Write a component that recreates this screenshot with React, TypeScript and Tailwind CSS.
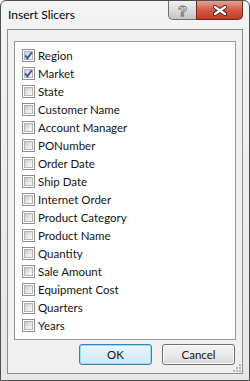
import React from "react";

const fields = [
  { name: "Region", checked: true },
  { name: "Market", checked: true },
  { name: "State", checked: false },
  { name: "Customer Name", checked: false },
  { name: "Account Manager", checked: false },
  { name: "PONumber", checked: false },
  { name: "Order Date", checked: false },
  { name: "Ship Date", checked: false },
  { name: "Internet Order", checked: false },
  { name: "Product Category", checked: false },
  { name: "Product Name", checked: false },
  { name: "Quantity", checked: false },
  { name: "Sale Amount", checked: false },
  { name: "Equipment Cost", checked: false },
  { name: "Quarters", checked: false },
  { name: "Years", checked: false },
];

const CheckBox = ({ checked }: { checked: boolean }) => (
  <div className="w-[13px] h-[13px] border border-[#8e8f8f] bg-white p-[1px] shrink-0 relative">
    <div className="w-full h-full border border-[#b4b4b4] bg-gradient-to-br from-[#c9c9c9] via-[#e6e6e6] to-[#fafafa]" />
    {checked && (
      <svg viewBox="0 0 11 11" className="absolute left-0 top-0 w-[11px] h-[11px]">
        <path d="M2.2 5.4 L4.4 8.4 L8.8 2.2" fill="none" stroke="#3a57a8" strokeWidth="1.9" />
      </svg>
    )}
  </div>
);

export default function App() {
  return (
    <div
      className="w-[250px] h-[381px] border border-[#4f4f4f] rounded-t-[6px] bg-gradient-to-b from-[#f4f4f4] to-[#e6e6e6] flex flex-col text-[#141414] overflow-hidden"
      style={{ fontFamily: 'Lato, "Noto Sans", sans-serif' }}
    >
      <div className="h-[28px] flex shrink-0">
        <div className="pl-[7px] pt-[6px] text-[12px] leading-[16px] text-black">Insert Slicers</div>
        <div className="ml-auto mr-[6px] flex h-[19px]">
          <div className="w-[28px] h-full border border-[#6f6f6f] border-t-0 border-r-0 rounded-bl-[5px] bg-gradient-to-b from-[#f0f0f0] via-[#dcdcdc] to-[#c4c4c4] flex items-center justify-center">
            <span
              className="text-[15px] leading-none font-bold text-white"
              style={{ WebkitTextStroke: "0.8px #5a5a5a", fontFamily: '"Liberation Sans", sans-serif' }}
            >
              ?
            </span>
          </div>
          <div className="w-[47px] h-full border border-[#6b2a20] border-t-0 rounded-br-[5px] bg-gradient-to-b from-[#e4a293] via-[#d25a43] to-[#c23a24] flex items-center justify-center">
            <svg viewBox="0 0 16 11" className="w-[16px] h-[11px]">
              <path d="M3 2 L13 9 M13 2 L3 9" stroke="#4a1a12" strokeWidth="4" strokeLinecap="round" />
              <path d="M3 2 L13 9 M13 2 L3 9" stroke="#ffffff" strokeWidth="2.4" strokeLinecap="round" />
            </svg>
          </div>
        </div>
      </div>

      <div className="mx-[6px] h-[345px] border border-[#8c8c8c] bg-[#f0f0f0] flex flex-col shrink-0 relative">
        <div className="mt-[11px] mx-[6px] h-[299px] border border-[#9a9a9a] bg-white pt-[4px] pl-[7px]">
          {fields.map((f) => (
            <div key={f.name} className="h-[18px] flex items-center gap-[3px]">
              <CheckBox checked={f.checked} />
              <span className="text-[11.5px] leading-[15px] whitespace-nowrap">{f.name}</span>
            </div>
          ))}
        </div>
        <div className="mt-[4px] mr-[7px] flex justify-end gap-[10px]">
          <button className="w-[73px] h-[21px] rounded-[3px] border border-[#3c7fb1] bg-gradient-to-b from-[#eaf6fd] to-[#d0e8f6] text-[11.5px] shadow-[inset_0_0_0_1px_#9fdcf7]">
            OK
          </button>
          <button className="w-[73px] h-[21px] rounded-[3px] border border-[#707070] bg-gradient-to-b from-[#f2f2f2] via-[#ebebeb] to-[#d8d8d8] text-[11.5px] shadow-[inset_0_0_0_1px_#fbfbfb]">
            Cancel
          </button>
        </div>
        <div className="absolute right-[1px] bottom-[1px] grid grid-cols-3 gap-[1px]">
          <span />
          <span />
          <span className="w-[2px] h-[2px] bg-[#b8b8b8]" />
          <span />
          <span className="w-[2px] h-[2px] bg-[#b8b8b8]" />
          <span className="w-[2px] h-[2px] bg-[#b8b8b8]" />
          <span className="w-[2px] h-[2px] bg-[#b8b8b8]" />
          <span className="w-[2px] h-[2px] bg-[#b8b8b8]" />
          <span className="w-[2px] h-[2px] bg-[#b8b8b8]" />
        </div>
      </div>
    </div>
  );
}
